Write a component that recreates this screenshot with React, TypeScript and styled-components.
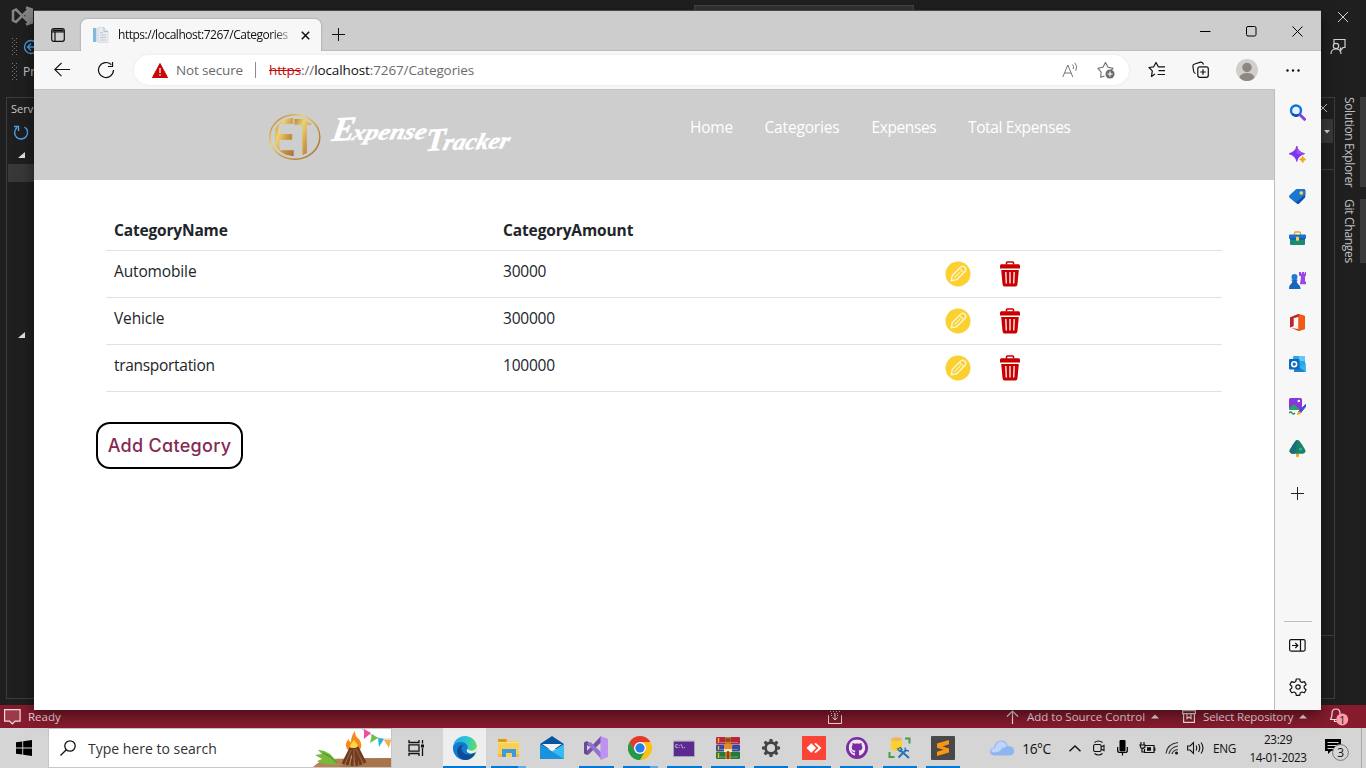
import React from "react";
import styled, { createGlobalStyle } from "styled-components";
import { FaGithub } from "react-icons/fa";

const GlobalStyle = createGlobalStyle`
  html, body { margin: 0; padding: 0; overflow: hidden; }
  * { box-sizing: border-box; }
  body { font-family: "Open Sans", "Noto Sans", sans-serif; font-size: 12px; }
  svg { display: block; flex: none; }
`;

const Desktop = styled.div`
  position: relative;
  display: flex;
  flex-direction: column;
  width: 1366px;
  height: 768px;
  overflow: hidden;
  background: #1f1f1f;
`;

/* ---------- IDE behind the browser ---------- */
const Ide = styled.div`
  display: flex;
  justify-content: space-between;
  height: 705px;
  background: #1f1f1f;
`;
const IdeLeft = styled.div`
  width: 40px;
  padding-top: 5px;
  color: #c8c8c8;
`;
const IdeLogo = styled.div`
  height: 29px;
  padding-left: 11px;
`;
const IdeToolRow = styled.div`
  display: flex;
  align-items: center;
  gap: 5px;
  height: 25px;
  padding-left: 11px;
  white-space: nowrap;
`;
const IdePanel = styled.div`
  margin: 13px 0 0 6px;
  height: 602px;
  border: 1px solid #3d3d3d;
  border-right: 0;
`;
const IdePanelTitle = styled.div`
  height: 24px;
  padding-left: 4px;
  line-height: 22px;
  font-size: 11px;
  white-space: nowrap;
`;
const IdeRefresh = styled.div`
  height: 24px;
  padding: 2px 0 0 6px;
`;
const IdeTreeMark = styled.div<{ $h: number }>`
  height: ${(p) => p.$h}px;
  padding: 6px 0 0 11px;
`;
const IdeSelected = styled.div`
  height: 18px;
  margin-left: 1px;
  margin-bottom: 144px;
  background: #383838;
`;
const IdeCommandBox = styled.div`
  width: 220px;
  height: 12px;
  margin: 5px 0 0 654px;
  padding: 3px 0 0 203px;
  border: 1px solid #444;
  background: #333;
`;
const IdeMiddle = styled.div`
  flex: 1;
`;
const IdeRight = styled.div`
  width: 52px;
`;
const IdeRightTop = styled.div`
  display: flex;
  flex-direction: column;
  gap: 15px;
  height: 97px;
  padding: 11px 0 0 15px;
`;
const IdeRightBody = styled.div`
  display: flex;
  justify-content: space-between;
`;
const IdeRightPanel = styled.div`
  width: 21px;
  height: 602px;
  border: 1px solid #3d3d3d;
  border-left: 0;
`;
const IdePanelClose = styled.div`
  height: 21px;
  padding: 6px 0 0 5px;
`;
const IdeDropdown = styled.div`
  display: flex;
  align-items: center;
  height: 24px;
  margin-right: 1px;
  padding-left: 9px;
  background: #383838;
`;
const IdeGap = styled.div<{ $h: number }>`
  height: ${(p) => p.$h}px;
  border-bottom: 1px solid #3d3d3d;
`;
const IdeTabs = styled.div`
  display: flex;
  flex-direction: column;
  gap: 12px;
`;
const IdeTab = styled.div<{ $h: number; $ls: number }>`
  display: flex;
  justify-content: flex-start;
  width: 24px;
  height: ${(p) => p.$h}px;
  border-right: 6px solid #3a3a3a;
  writing-mode: vertical-rl;
  line-height: 22px;
  font-size: 12px;
  letter-spacing: ${(p) => p.$ls}px;
  color: #c0c0c0;
  white-space: nowrap;
`;

const StatusBar = styled.div`
  display: flex;
  align-items: center;
  height: 23px;
  padding-left: 4px;
  background: #861b2d;
  color: #f4dde0;
  line-height: 23px;
`;
const StatusText = styled.span<{ $w: number; $ml: number; $ls?: number }>`
  width: ${(p) => p.$w}px;
  margin-left: ${(p) => p.$ml}px;
  letter-spacing: ${(p) => p.$ls ?? 0}px;
  font-size: 11.5px;
  white-space: nowrap;
`;
const StatusIcon = styled.span<{ $ml?: number }>`
  margin-left: ${(p) => p.$ml ?? 0}px;
`;

/* ---------- Browser ---------- */
const Browser = styled.div`
  position: absolute;
  left: 34px;
  top: 11px;
  display: flex;
  flex-direction: column;
  width: 1287px;
  height: 699px;
  background: #f7f7f7;
  box-shadow: 0 -1px 0 #4a4646, 0 5px 14px rgba(0, 0, 0, 0.5);
`;
const TitleBar = styled.div`
  display: flex;
  height: 40px;
  background: #cdcdcd;
  border-bottom: 1px solid #bdbdbd;
`;
const TabActions = styled.div`
  width: 47px;
  padding: 17px 0 0 17px;
`;
const Tab = styled.div`
  display: flex;
  align-items: center;
  width: 240px;
  height: 32px;
  margin-top: 8px;
  padding-left: 11px;
  border-radius: 6px 6px 0 0;
  background: #f7f7f7;
  box-shadow: 0 0 2px rgba(0, 0, 0, 0.35);
  clip-path: inset(-3px -3px 0 -3px);
`;
const TabTitle = styled.div`
  width: 174px;
  margin: 0 9px 2px 9px;
  white-space: nowrap;
  color: #111;
  font-size: 12px;
  letter-spacing: -0.48px;
  mask-image: linear-gradient(90deg, #000 155px, transparent 178px);
`;
const NewTab = styled.div`
  padding: 16px 0 0 10px;
`;
const WindowButtons = styled.div`
  display: flex;
  align-items: center;
  margin-left: auto;
  height: 40px;
`;
const WindowButton = styled.div`
  display: grid;
  place-items: center;
  width: 46px;
  padding-right: 1px;
`;
const Toolbar = styled.div`
  display: flex;
  align-items: center;
  height: 39px;
  padding-left: 20px;
  border-bottom: 1px solid #c2c2c2;
  margin-right: 46px;
`;
const ToolbarRow = styled.div`
  display: flex;
  align-items: center;
  flex: none;
  width: 1267px;
`;
const ToolSlot = styled.div<{ $w: number }>`
  display: flex;
  align-items: center;
  flex: none;
  width: ${(p) => p.$w}px;
`;
const AddressBar = styled.div`
  display: flex;
  align-items: center;
  width: 995px;
  height: 30px;
  margin-right: 19px;
  padding-left: 18px;
  border-radius: 15px;
  background: #fff;
  box-shadow: 0 0 3px rgba(0, 0, 0, 0.08);
  font-size: 13.5px;
`;
const NotSecure = styled.span`
  width: 79px;
  margin-left: 8px;
  color: #6b6b6b;
  letter-spacing: -0.15px;
  white-space: nowrap;
`;
const AddressDivider = styled.span`
  width: 1px;
  height: 16px;
  margin-right: 13px;
  background: #8a8a8a;
`;
const Url = styled.span`
  flex: 1;
  color: #6b6b6b;
  letter-spacing: -0.11px;
`;
const UrlScheme = styled.span`
  color: #c5080c;
  text-decoration: line-through;
`;
const UrlHost = styled.span`
  color: #111;
`;
const Content = styled.div`
  display: flex;
  flex: 1;
`;
const Page = styled.div`
  width: 1240px;
  background: #fff;
`;
const SiteHeader = styled.header`
  display: flex;
  height: 90px;
  padding-left: 234px;
  background: #cecece;
`;
const Brand = styled.div`
  width: 422px;
  padding-top: 19px;
`;
const SiteNav = styled.nav`
  display: flex;
  height: 24px;
  margin-top: 25px;
  color: #fff;
  font-size: 15.5px;
  line-height: 24px;
`;
const NavLink = styled.a<{ $w: number; $ls: number }>`
  width: ${(p) => p.$w}px;
  letter-spacing: ${(p) => p.$ls}px;
  white-space: nowrap;
`;
const CategoryTable = styled.div`
  width: 1116px;
  margin: 31px 0 0 72px;
  color: #212529;
  font-size: 15.5px;
`;
const TableRow = styled.div<{ $head?: boolean }>`
  display: grid;
  grid-template-columns: 389px 442px 1fr;
  height: ${(p) => (p.$head ? 40 : 47)}px;
  padding: ${(p) => (p.$head ? 7 : 8)}px 8px 0;
  border-bottom: 1px solid #dee2e6;
  font-weight: ${(p) => (p.$head ? 700 : 400)};
  line-height: 24px;
`;
const Cell = styled.span<{ $ls?: number }>`
  letter-spacing: ${(p) => p.$ls ?? 0}px;
`;
const Actions = styled.span`
  display: flex;
  gap: 28px;
  padding-top: 2px;
`;
const AddButton = styled.button`
  display: block;
  width: 147px;
  height: 47px;
  margin: 30px 0 0 62px;
  padding: 0;
  border: 2px solid #000;
  border-radius: 14px;
  background: #fff;
  color: #832a52;
  font-family: Inter, sans-serif;
  font-feature-settings: "cv11", "ss03";
  font-size: 18px;
  font-weight: 500;
  letter-spacing: 0.3px;
`;
const SideRail = styled.aside`
  display: flex;
  flex-direction: column;
  width: 47px;
  padding: 1px 1px 0 0;
  border-left: 1px solid #bdbdbd;
  background: #f7f7f7;
`;
const RailSlot = styled.div<{ $h?: number }>`
  display: grid;
  place-items: center;
  height: ${(p) => p.$h ?? 42}px;
`;
const RailFooter = styled.div`
  margin-top: auto;
  padding-bottom: 2px;
`;
const RailDivider = styled.div`
  width: 28px;
  height: 1px;
  margin: 0 0 2px 9px;
  background: #bfbfbf;
`;

/* ---------- Taskbar ---------- */
const Taskbar = styled.div`
  display: flex;
  height: 40px;
  background: #d5d5d5;
  color: #111;
`;
const StartButton = styled.div`
  display: grid;
  place-items: center;
  width: 48px;
`;
const SearchBox = styled.div`
  display: flex;
  align-items: center;
  width: 344px;
  height: 40px;
  padding-left: 11px;
  border: 1px solid #c6c6c6;
  background: #fff;
`;
const SearchText = styled.span`
  width: 227px;
  margin-left: 12px;
  color: #333;
  font-size: 14px;
  white-space: nowrap;
`;
const TaskSlot = styled.div<{ $w: number; $active?: boolean; $pr?: number }>`
  display: flex;
  flex-direction: column;
  align-items: center;
  justify-content: space-between;
  width: ${(p) => p.$w}px;
  padding-right: ${(p) => p.$pr ?? 0}px;
  background: ${(p) => (p.$active ? "#eeeeee" : "transparent")};
`;
const TaskGlyph = styled.div`
  display: grid;
  place-items: center;
  height: 38px;
  padding-top: 2px;
`;
const TaskLine = styled.div<{ $w: number; $split?: boolean }>`
  width: ${(p) => p.$w}px;
  height: 2px;
  background: ${(p) =>
    p.$w === 0 ? "none" : p.$split ? "linear-gradient(90deg, #0078d7 78%, #5fa9e6 78%)" : "#0078d7"};
`;
const Tray = styled.div`
  display: flex;
  align-items: center;
  margin-left: auto;
`;
const TraySlot = styled.div<{ $w: number; $fs?: number; $ls?: number; $pr?: number }>`
  display: flex;
  align-items: center;
  justify-content: center;
  width: ${(p) => p.$w}px;
  padding-right: ${(p) => p.$pr ?? 0}px;
  font-size: ${(p) => p.$fs ?? 12}px;
  letter-spacing: ${(p) => p.$ls ?? 0}px;
  white-space: nowrap;
`;
const Clock = styled.div`
  width: 70px;
  padding-bottom: 1px;
  text-align: center;
  font-size: 11.7px;
  line-height: 18px;
  letter-spacing: -0.38px;
`;
const ShowDesktop = styled.div`
  width: 5px;
  height: 40px;
  border-left: 1px solid #a8a8a8;
`;

/* ---------- Icons ---------- */
type GlyphProps = { w: number; h?: number; children: React.ReactNode; stroke?: string; sw?: number; fill?: string; box?: string };
const Glyph = ({ w, h = w, children, stroke = "none", sw = 1, fill = "none", box }: GlyphProps) => (
  <svg width={w} height={h} viewBox={box ?? `0 0 ${w} ${h}`} fill={fill} stroke={stroke} strokeWidth={sw}>
    {children}
  </svg>
);

const Grip = () => (
  <Glyph w={7} h={18} fill="#777">
    {[0, 4, 8, 12, 16].map((y) => (
      <g key={y}>
        <rect x="1" y={y} width="1" height="1" />
        <rect x="5" y={y} width="1" height="1" />
        <rect x="3" y={y + 2} width="1" height="1" />
      </g>
    ))}
  </Glyph>
);

const Caret = ({ down, color = "#f4dde0" }: { down?: boolean; color?: string }) => (
  <Glyph w={8} h={5} fill={color}>
    <path d={down ? "M1 1h6L4 4.500z" : "M0 4.500L4 .5l4 4z"} />
  </Glyph>
);

const BrandMark = () => (
  <svg width="250" height="56" viewBox="0 0 250 56">
    <defs>
      <linearGradient id="gold" x1="0" y1="0" x2="1" y2="1">
        <stop offset="0" stopColor="#a8702a" />
        <stop offset=".35" stopColor="#efd26a" />
        <stop offset=".6" stopColor="#c9953c" />
        <stop offset="1" stopColor="#9f6a2b" />
      </linearGradient>
      <clipPath id="disc">
        <ellipse cx="26.800" cy="28" rx="21.500" ry="19.300" />
      </clipPath>
    </defs>
    <ellipse cx="26.800" cy="28" rx="25" ry="22.300" fill="none" stroke="url(#gold)" strokeWidth="1.500" />
    <g clipPath="url(#disc)" fill="url(#gold)" stroke="url(#gold)" strokeWidth="1.800" fontFamily="Liberation Sans" fontSize="52">
      <text x="5.500" y="46" textLength="21" lengthAdjust="spacingAndGlyphs">E</text>
      <text x="26.500" y="46.500" textLength="20.500" lengthAdjust="spacingAndGlyphs">T</text>
    </g>
    <g fill="#fff" stroke="#fff" strokeWidth=".5" fontFamily="Liberation Serif" fontStyle="italic" fontWeight="700">
      <text transform="translate(63 32) rotate(-3) skewX(-12)" fontSize="34">E</text>
      <text transform="translate(83 31) rotate(-1) skewX(-16)" fontSize="22" textLength="74" lengthAdjust="spacingAndGlyphs">xpense</text>
      <text transform="translate(157 42) rotate(-3) skewX(-8)" fontSize="32">T</text>
      <text transform="translate(174 41) rotate(-1.500) skewX(-16)" fontSize="23" textLength="66" lengthAdjust="spacingAndGlyphs">racker</text>
    </g>
  </svg>
);

const EditIcon = () => (
  <Glyph w={26}>
    <circle cx="13" cy="13" r="12.500" fill="#fbd031" />
    <g transform="rotate(45 13 13)" stroke="#fff6d0" strokeLinejoin="round">
      <path d="M10 6q0-2.500 3-2.500t3 2.500V18L13 22.500 10 18z" strokeWidth="1.400" />
      <path d="M10.300 8h5.400M13 9.500v8.500" strokeWidth="1" />
    </g>
  </Glyph>
);

const TrashIcon = () => (
  <Glyph w={22} h={26}>
    <path d="M7.500 3.500V1.800q0-.8.8-.8h5.400q.8 0 .8.800v1.700" stroke="#c90000" strokeWidth="1.600" />
    <path d="M2.200 3.200h17.600q1.200 0 1.200 1.800V7.500H1V5q0-1.800 1.200-1.800zM2.200 9h17.600l-1.300 14q-.3 2.500-2 2.500h-11q-1.700 0-2-2.500z" fill="#c90000" />
    <path d="M6.800 11l.5 11.500M11 11v11.500M15.200 11l-.5 11.500" stroke="#fff" strokeWidth="1.300" />
  </Glyph>
);

const railIcons: React.ReactNode[] = [
  <>
    <circle cx="7" cy="6.500" r="5" stroke="#1473d6" strokeWidth="2.400" fill="#dff3ff" />
    <path d="M11.200 11l4.300 4.300" stroke="#8b3ce0" strokeWidth="3" strokeLinecap="round" />
    <path d="M3.500 10A5 5 0 0 0 9.500 11" stroke="#1746b8" strokeWidth="2.400" />
  </>,
  <>
    <path d="M7.800 0q1 6 7.800 7.700Q9 9.500 7.800 15.500 6.500 9.500 0 7.700 6.600 6 7.800 0z" fill="#7d35ee" stroke="#7d35ee" strokeWidth=".8" />
    <path d="M7.800 0q1 6 7.800 7.700H7.800z" fill="#a950f2" />
    <path d="M13.700 10q.5 2.800 3.300 3.500-2.800.7-3.300 3.500-.6-2.800-3.400-3.500 2.800-.7 3.400-3.500z" fill="#f0aa13" stroke="#f0aa13" strokeWidth=".5" />
  </>,
  <>
    <path d="M8.500 1h6q1.800 0 1.800 1.800v5.700q0 .8-.6 1.400l-5.500 5.600q-1.200 1-2.400 0L.8 9.700q-1-1.200 0-2.400L7 1.600q.7-.6 1.500-.6z" fill="#0f50a8" />
    <path d="M8.500 1h6q1.800 0 1.800 1.800v4L6.500 14.500.8 9.700q-1-1.200 0-2.400L7 1.600q.7-.6 1.500-.6z" fill="#1979d2" />
    <circle cx="12.300" cy="4.900" r="1.500" fill="#ffe08a" stroke="#edbb31" />
  </>,
  <>
    <path d="M5.500 5V3q0-1 1-1h4q1 0 1 1v2" stroke="#e6a719" strokeWidth="1.300" />
    <rect x="1" y="7" width="15" height="8" rx="1" fill="#198a78" />
    <rect y="4.500" width="17" height="4.500" rx="1" fill="#1773cf" />
    <path d="M1 9h15" stroke="#0e4d92" />
    <rect x="7" y="6.800" width="3" height="4" rx=".8" fill="#ffd13b" />
  </>,
  <>
    <path d="M10 0h2v1.500h1V0h2v1.500h.8V0H17v3.500l-1 1V9l1 1.200v2h-6L12 4.500l-2-1z" fill="#9d45e5" />
    <circle cx="5.500" cy="5" r="3" fill="#1c7cd5" />
    <path d="M2.500 7.500h6v1.300H7.600q.2 3 2.400 4.200 1.500.7 1.500 4H0q0-3.300 1-4 2.300-1.200 2.500-4.200h-1z" fill="#1766be" />
  </>,
  <>
    <path d="M9.500 0l6.500 2v13l-6.500 2-7-3 7 .9V2.800L4.500 4v8L1 13.400V3.600z" fill="#e24a12" />
    <path d="M9.500 0l6.500 2v13l-6.500 2V0z" fill="#f05a14" />
    <path d="M9.500 0v2.800L4.500 4v8L1 13.400V3.600z" fill="#be2430" />
  </>,
  <>
    <rect x="4" width="12" height="11" rx="1" fill="#29a7ea" />
    <path d="M10 0h6v5h-6z" fill="#63c8f5" />
    <path d="M5 8l5 3 6.500-4v9H5z" fill="#1683d2" />
    <path d="M10 11l6.500 5V7z" fill="#35b1ef" />
    <rect y="3" width="10.500" height="10.500" rx="1" fill="#0f68bd" />
    <circle cx="5.200" cy="8.200" r="2.400" stroke="#fff" strokeWidth="1.600" />
  </>,
  <>
    <rect y="0" width="13" height="12" rx="1.500" fill="#8a35dd" />
    <circle cx="9.800" cy="3" r="1.300" fill="#fff" />
    <path d="M0 10.500l5-4.500 6 6H1.500Q0 12 0 10.500z" fill="#28a463" />
    <path d="M9.500 13.500L16.500 6.500l1 1-6 7.500z" fill="#5546dd" stroke="#4054d2" />
    <path d="M8 17q.3-4 2.500-3.500 2 .8.500 2.500-1 1-3 1z" fill="#f2b11d" />
    <path d="M0 15q2-2 3 0t3 0" stroke="#208f52" strokeWidth="1.300" />
  </>,
  <>
    <rect x="7" y="12" width="3" height="5" rx="1" fill="#f1a61c" />
    <path d="M8.500 0q1 0 2 1l2.500 3.500 3 5q1.500 3.500-2 4.200H3q-3.500-.7-2-4.200l3-5L6.500 1q1-1 2-1z" fill="#18836b" />
    <path d="M8.500 0q-1 0-2 1L4 4.500l-3 5q-1.500 3.500 2 4.200h3z" fill="#1a6f78" />
    <circle cx="11.500" cy="9" r="1.600" fill="#48a98a" />
  </>,
];

const gearTeeth = [0, 45, 90, 135, 180, 225, 270, 315];

const EdgeLogo = () => (
  <svg width="24" height="24" viewBox="0 0 24 24">
    <defs>
      <linearGradient id="edgeTop" x1="0" x2="1" y1=".3" y2=".5">
        <stop offset="0" stopColor="#23a8ee" />
        <stop offset=".55" stopColor="#2bc8d1" />
        <stop offset="1" stopColor="#68df52" />
      </linearGradient>
    </defs>
    <circle cx="12" cy="12" r="12" fill="url(#edgeTop)" />
    <path d="M0 11.500C1 7 5 5.800 8.500 6c4 .2 6.500 3 6.300 6 0 1.500-1.200 2-1 3.200.4 2 5 3.300 8.800.9C20.500 21 16.500 24 12 24 5.400 24 0 18.600 0 11.500z" fill="#137bcf" />
    <path d="M8.500 12.500q0-3 3-3.700c-4.500-.6-7.500 3-7.300 6.700.2 4.500 3.800 8.500 8.800 8.500 4-.2 7.500-2.900 9.500-7-3 2-13.500 3.500-14-4.500z" fill="#114a98" />
    <path d="M14.700 12.700c-.6 1-1 1.300-.9 2.500.4 2 5 3.300 8.800.9 1.500-1.600 1.600-3.600 1.200-5.600q-1 3.800-5 4.200c-2 .2-3.600-.8-4.100-2z" fill="#eee" />
  </svg>
);

const taskIcons: { w: number; line: number; split?: boolean; active?: boolean; icon: React.ReactNode }[] = [
  { w: 43, line: 43, active: true, icon: <EdgeLogo /> },
  {
    w: 44, line: 35, split: true,
    icon: (
      <Glyph w={24}>
        <path d="M2 3h9l1.500 2H23v16H2z" fill="#fbce55" />
        <path d="M2 3h8.500v3H2z" fill="#dc9a0c" />
        <path d="M2 6h21v1H2z" fill="#fde08c" />
        <path d="M6 21v-8h14v8h-4v-4h-6v4z" fill="#3d9bdb" />
        <path d="M2 18h4v3H2zM20 18h3v3h-3z" fill="#f5bd3d" />
      </Glyph>
    ),
  },
  {
    w: 44, line: 0,
    icon: (
      <Glyph w={24}>
        <path d="M0 8L12 0l12 8v5H0z" fill="#0a559f" />
        <path d="M0 8l12 7.500L24 8v15H0z" fill="#35bdf1" />
        <path d="M2.500 8h19L12 15z" fill="#f4f4f4" />
        <path d="M0 8l24 15H0z" fill="#1c91dc" />
        <path d="M2.500 8h19L12 14.500z" fill="#f4f4f4" />
      </Glyph>
    ),
  },
  {
    w: 44, line: 35,
    icon: (
      <Glyph w={24}>
        <path d="M0 6.500L3 5l4 3.500L3 12l4 3.500L3 19l-3-1.500z" fill="#6c4799" />
        <path d="M3 9v6l3.500-3z" fill="#d5d5d5" />
        <path d="M17 0v6.500L4 19l-1.500-3.500z" fill="#7452a4" />
        <path d="M3 7.500L6.500 6 18 17v7z" fill="#9571cf" />
        <path d="M16.500 0L24 3v18l-7.500 3z" fill="#bd92f0" />
      </Glyph>
    ),
  },
  {
    w: 44, line: 35, split: true,
    icon: (
      <Glyph w={24}>
        <circle cx="12" cy="12" r="12" fill="#fbc116" />
        <path d="M1.600 6A12 12 0 0 1 22.400 6H12L6.800 15z" fill="#e23b2e" />
        <path d="M1.600 6A12 12 0 0 0 12 24l5.200-9H6.800z" fill="#229a4b" />
        <circle cx="12" cy="12" r="6" fill="#fff" />
        <circle cx="12" cy="12" r="4.700" fill="#2a7bea" />
      </Glyph>
    ),
  },
  {
    w: 44, line: 35,
    icon: (
      <Glyph w={22} h={17}>
        <rect x=".5" y=".5" width="21" height="16" fill="#5b2a91" stroke="#a9a2b0" />
        <path d="M0 .8h22" stroke="#c8c8c8" strokeWidth="1.500" />
        <text x="2" y="8" fontFamily="DejaVu Sans Mono" fontSize="5.500" fill="#fff" textLength="11">C:\.</text>
      </Glyph>
    ),
  },
  {
    w: 43, line: 34,
    icon: (
      <Glyph w={24} h={22}>
        <rect y="0" width="24" height="7" rx="1" fill="#b7263d" />
        <rect y="7.500" width="24" height="6.500" rx="1" fill="#3a46a5" />
        <rect y="14.500" width="24" height="7.500" rx="1" fill="#257a3b" />
        <path d="M2.500 1v5M2.500 9v4M2.500 16v5" stroke="#efb62d" strokeWidth="1.500" />
        <path d="M4 5.500h18M4 12.500h18M4 20h18" stroke="#ffffff55" />
        <path d="M9 0h6v22H9z" fill="#c5792c" />
        <path d="M9.500 1.500h5v3h-5z" fill="#7b451a" />
        <path d="M8 7h8.500l-.5 6H8z" fill="#e48b2b" />
        <path d="M8 12h8v3H8z" fill="#f6e4c0" />
        <path d="M12 14v8" stroke="#6e3e14" strokeWidth="1.600" />
      </Glyph>
    ),
  },
  {
    w: 43, line: 34,
    icon: (
      <Glyph w={18} box="-9 -9 18 18">
        <circle r="5.400" stroke="#424242" strokeWidth="2.600" />
        {gearTeeth.map((a) => (
          <path key={a} d="M-2 -6.300L-1.300 -9h2.600L2 -6.300z" fill="#424242" transform={`rotate(${a})`} />
        ))}
      </Glyph>
    ),
  },
  {
    w: 43, line: 34,
    icon: (
      <Glyph w={24}>
        <path d="M0 0h24v24H0z" fill="#fb4336" />
        <path d="M4.500 12L9.300 7.200l4.800 4.800-4.800 4.800z" fill="#fff" />
        <path d="M12.200 7.700l1.700-.7 5.600 5-5.600 5-1.700-.7 4.300-4.300z" fill="#fff" />
      </Glyph>
    ),
  },
  {
    w: 43, line: 33,
    icon: (
      <Glyph w={22}>
        <circle cx="11" cy="11" r="11" fill="#7a2ca0" />
        <g transform="translate(2.500 2.200)">
          <FaGithub size={17} color="#eee6f3" />
        </g>
      </Glyph>
    ),
  },
  {
    w: 43, line: 34,
    icon: (
      <Glyph w={24}>
        <path d="M3 3q5.500-4 11 0v10q-5.500 4-11 0z" fill="#fbd12c" />
        <ellipse cx="8.500" cy="3.200" rx="5.500" ry="2" fill="#eeb36d" />
        <path d="M17 2.500h4.500v5M1.500 16v5H6.500" stroke="#4c9c46" strokeWidth="2" />
        <path d="M10.500 21.500l8-8M12 14l9 8" stroke="#2474b8" strokeWidth="2" />
        <path d="M9.500 13l3-1.500 1.500 2-2 2zM17 11.500l.5 3 3.500.5" stroke="#2474b8" strokeWidth="1.300" />
      </Glyph>
    ),
  },
  {
    w: 43, line: 34,
    icon: (
      <Glyph w={24}>
        <rect width="24" height="24" rx="1" fill="#494949" />
        <path d="M6 7.500L18 4v4.300l-6.500 2.200L18 12.500v4L6 20v-4.200l6.500-2.100L6 11.800z" fill="#fb9512" />
      </Glyph>
    ),
  },
];

const SearchArt = () => (
  <Glyph w={78} h={38}>
    <path d="M0 38q8-8 18-8 20-1 60-1v9z" fill="#b58355" />
    <path d="M46 29h32v9H26z" fill="#a06d45" opacity=".6" />
    <path d="M25 35Q16 20 5 21l4 4-7 1 7 4-5 2q8 5 21 3z" fill="#78b83d" />
    <path d="M10 24q8 3 14 10" stroke="#4a8a24" />
    <path d="M34 20q-3-6 2-10 0 3 2 3 0-6 4-11 0 6 4 8 4 6 1 11-6 5-13-1z" fill="#f58b1a" />
    <path d="M37 21q-1-5 4-10 4 4 5 9-4 5-9 1z" fill="#fdd548" />
    <path d="M30 35l8-16M34 36l5-17M39 37l2-18M44 37l-2-18M48 36l-5-17M52 34l-8-16" stroke="#6d3b22" strokeWidth="3" />
    <path d="M32 35l6-14M41 36V20M50 34l-7-14" stroke="#a4643b" />
    <path d="M49 0q14 12 29 10" stroke="#999" strokeWidth=".6" />
    <path d="M51 0l7 4-7 6z" fill="#f04fa5" />
    <path d="M59 5l6 4-8 5z" fill="#6dc04a" />
    <path d="M65 9l6 1-5 8z" fill="#27b2df" />
    <path d="M71 11h7l-2 8z" fill="#f6ad48" />
  </Glyph>
);

/* ---------- Screen ---------- */
const categories = [
  { name: "Automobile", amount: "30000" },
  { name: "Vehicle", amount: "300000" },
  { name: "transportation", amount: "100000" },
];

const IdeWindow = () => (
  <Ide>
    <IdeLeft>
      <IdeLogo>
        <Glyph w={22}>
          <path d="M2 6l3-1.500L15.500 15V6.500L5 17l-3-1.500zM15 2.500l6 2v13l-6 2" stroke="#858585" strokeWidth="2.500" />
          <path d="M16 3l4 2v12l-4 2z" fill="#858585" />
        </Glyph>
      </IdeLogo>
      <IdeToolRow>
        <Grip />
        <Glyph w={16} stroke="#4f9fe8" sw={1.300}>
          <circle cx="8" cy="8" r="6.500" />
          <path d="M12 8H4.500M8 4.500L4.500 8 8 11.500" />
        </Glyph>
      </IdeToolRow>
      <IdeToolRow>
        <Grip />
        Pr
      </IdeToolRow>
      <IdePanel>
        <IdePanelTitle>Serv</IdePanelTitle>
        <IdeRefresh>
          <Glyph w={17} stroke="#4da2ee" sw={1.400}>
            <path d="M11.500 3A6.500 6.500 0 1 1 4 3.500M1 2.500h4.500V7" />
          </Glyph>
        </IdeRefresh>
        <IdeTreeMark $h={18}>
          <Glyph w={7} fill="#e0e0e0"><path d="M7 0v6H0z" /></Glyph>
        </IdeTreeMark>
        <IdeSelected />
        <IdeTreeMark $h={20}>
          <Glyph w={7} fill="#e0e0e0"><path d="M7 0v6H0z" /></Glyph>
        </IdeTreeMark>
      </IdePanel>
    </IdeLeft>
    <IdeMiddle>
      <IdeCommandBox>
        <Glyph w={6} h={3} stroke="#aaa"><path d="M1 2.500q2-2.500 4 0" /></Glyph>
      </IdeCommandBox>
    </IdeMiddle>
    <IdeRight>
      <IdeRightTop>
        <Glyph w={22} h={12} stroke="#d0d0d0"><path d="M9 1l10 10M19 1L9 11" /></Glyph>
        <Glyph w={18} h={17} stroke="#d0d0d0" sw={1.200}>
          <path d="M5 6V1.500h11v8h-2l-2.500 3V9.500" />
          <circle cx="7" cy="8" r="2.700" />
          <path d="M2 16q0-5 5-5t5 5" />
        </Glyph>
      </IdeRightTop>
      <IdeRightBody>
        <IdeRightPanel>
          <IdePanelClose>
            <Glyph w={9} stroke="#d0d0d0"><path d="M0 0l8 8M8 0L0 8" /></Glyph>
          </IdePanelClose>
          <IdeDropdown><Caret down color="#d0d0d0" /></IdeDropdown>
          <IdeGap $h={27} />
          <IdeGap $h={466} />
        </IdeRightPanel>
        <IdeTabs>
          <IdeTab $h={90} $ls={-0.35}>Solution Explorer</IdeTab>
          <IdeTab $h={64} $ls={-0.28}>Git Changes</IdeTab>
        </IdeTabs>
      </IdeRightBody>
    </IdeRight>
  </Ide>
);

const BrowserWindow = () => (
  <Browser>
    <TitleBar>
      <TabActions>
        <Glyph w={14} stroke="#111" sw={1.200}>
          <rect x=".7" y=".7" width="12.600" height="12.600" rx="2" />
          <path d="M1 4h12M4 4v9" />
          <path d="M1.500 2.500h11" strokeWidth="2" />
        </Glyph>
      </TabActions>
      <Tab>
        <Glyph w={17}>
          <path d="M1 1h3.500v14H1z" fill="#82b7de" />
          <path d="M4.500 1h1.500v14H4.500z" fill="#dfeaf3" />
          <path d="M6 .5h6l4 4v11H6z" fill="#e9ecef" stroke="#cdd3da" strokeWidth=".6" />
          <path d="M12 .5v4h4" stroke="#b7bfc9" />
          <path d="M8 5.500h3M8 8h6M8 10.500h6M8 13h6" stroke="#c3cad2" />
        </Glyph>
        <TabTitle>https://localhost:7267/Categories</TabTitle>
        <Glyph w={9} stroke="#111" sw={1.500}><path d="M.8 .8l7.400 7.400M8.200 .8L.8 8.200" /></Glyph>
      </Tab>
      <NewTab>
        <Glyph w={15} stroke="#111" sw={1}><path d="M7.500 1v13M1 7.500h13" /></Glyph>
      </NewTab>
      <WindowButtons>
        <WindowButton><Glyph w={11} stroke="#000"><path d="M0 5.500h10.500" /></Glyph></WindowButton>
        <WindowButton><Glyph w={11} stroke="#000"><rect x=".5" y=".5" width="9.500" height="9.500" rx="1.500" /></Glyph></WindowButton>
        <WindowButton><Glyph w={11} stroke="#000"><path d="M.5 .5l10 10M10.500 .5l-10 10" /></Glyph></WindowButton>
      </WindowButtons>
    </TitleBar>
    <Toolbar>
      <ToolbarRow>
        <ToolSlot $w={43}>
          <Glyph w={17} stroke="#111" sw={1.100}><path d="M7.500 1L.8 7.500l6.700 6.700M1 7.500h15" /></Glyph>
        </ToolSlot>
        <ToolSlot $w={37}>
          <Glyph w={18} stroke="#111" sw={1.200}><path d="M16.500 9a7.500 7.500 0 1 1-2.200-5.300M15.500 1v4.500H11" /></Glyph>
        </ToolSlot>
        <AddressBar>
          <Glyph w={16} h={15}>
            <path d="M8 .5L15.500 14.500H.5z" fill="#cb0606" stroke="#cb0606" strokeLinejoin="round" />
            <path d="M8 5v5M8 11.200v1.500" stroke="#fff" strokeWidth="1.300" />
          </Glyph>
          <NotSecure>Not secure</NotSecure>
          <AddressDivider />
          <Url>
            <UrlScheme>https</UrlScheme>://<UrlHost>localhost</UrlHost>:7267/Categories
          </Url>
          <ToolSlot $w={35}>
            <Glyph w={17} stroke="#747474" sw={1}>
              <path d="M.8 15L5.800 3l5 12M2.600 11H9M10.500 2.500q2 2 .6 4.500M12.800 .8q3.400 3.500 1 8" />
            </Glyph>
          </ToolSlot>
          <ToolSlot $w={32}>
            <Glyph w={18} stroke="#6b6b6b" sw={1.100}>
              <path d="M7.500 15l-3.800 1.300.4-5.300-3.200-3.700 5-1L8.500 1.500 11 6.300l5 1-2 2" strokeLinejoin="round" />
              <circle cx="13" cy="13" r="4.500" fill="#6b6b6b" stroke="none" />
              <path d="M13 10.500v5M10.500 13h5" stroke="#fff" />
            </Glyph>
          </ToolSlot>
        </AddressBar>
        <ToolSlot $w={44}>
          <Glyph w={18} stroke="#111" sw={1.200}>
            <path d="M7 13l-3.500 2.500.8-5.700L1 6.500l4.700-.7L8 1.500l2.300 4.300h6.700M10.500 9.700h6.500M9.500 13.500h7.500" strokeLinejoin="round" />
          </Glyph>
        </ToolSlot>
        <ToolSlot $w={44}>
          <Glyph w={18} stroke="#111" sw={1.200}>
            <rect x="5.800" y="5.800" width="10.500" height="10.500" rx="2" />
            <path d="M11 8.300v5.500M8.300 11h5.500M3.500 12.500Q2 12 1.700 10.500L.9 5.500Q.7 3.500 2.600 3l6-1.800Q10.600 .8 11.500 3.500" />
          </Glyph>
        </ToolSlot>
        <ToolSlot $w={50}>
          <Glyph w={22}>
            <circle cx="11" cy="11" r="11" fill="#d1cfca" />
            <circle cx="11" cy="8.500" r="4.700" fill="#8d8682" />
            <path d="M3.500 18.500q1-4.500 7.500-4.500t7.500 4.500q-3 3.500-7.500 3.500t-7.500-3.500z" fill="#8d8682" />
          </Glyph>
        </ToolSlot>
        <Glyph w={14} h={3} fill="#111">
          <circle cx="1.500" cy="1.500" r="1.200" /><circle cx="7" cy="1.500" r="1.200" /><circle cx="12.500" cy="1.500" r="1.200" />
        </Glyph>
      </ToolbarRow>
    </Toolbar>
    <Content>
      <Page>
        <SiteHeader>
          <Brand><BrandMark /></Brand>
          <SiteNav>
            <NavLink $w={74.500} $ls={-0.2}>Home</NavLink>
            <NavLink $w={107} $ls={-0.17}>Categories</NavLink>
            <NavLink $w={96.500} $ls={-0.4}>Expenses</NavLink>
            <NavLink $w={110} $ls={-0.38}>Total Expenses</NavLink>
          </SiteNav>
        </SiteHeader>
        <CategoryTable>
          <TableRow $head>
            <Cell $ls={-0.17}>CategoryName</Cell>
            <Cell $ls={-0.12}>CategoryAmount</Cell>
          </TableRow>
          {categories.map((c) => (
            <TableRow key={c.name}>
              <Cell $ls={c.name === "transportation" ? -0.3 : -0.14}>{c.name}</Cell>
              <Cell $ls={-0.22}>{c.amount}</Cell>
              <Actions><EditIcon /><TrashIcon /></Actions>
            </TableRow>
          ))}
        </CategoryTable>
        <AddButton>Add Category</AddButton>
      </Page>
      <SideRail>
        {railIcons.map((icon, i) => (
          <RailSlot key={i}><Glyph w={17}>{icon}</Glyph></RailSlot>
        ))}
        <RailSlot $h={49}><Glyph w={13} stroke="#222"><path d="M6.500 0v13M0 6.500h13" /></Glyph></RailSlot>
        <RailFooter>
          <RailDivider />
          <RailSlot>
            <Glyph w={17} h={13} stroke="#111" sw={1.200}>
              <rect x=".6" y=".6" width="15.500" height="11.500" rx="1.500" />
              <path d="M11.500 1v11M3 6.500h5.500M6.300 4l2.500 2.500L6.300 9" />
            </Glyph>
          </RailSlot>
          <RailSlot>
            <Glyph w={18} stroke="#111" sw={1.200}>
              <circle cx="9" cy="9" r="2.200" />
              <path d="M7.300 1h3.400l.6 2.500 1.600.9 2.500-.8 1.700 3-1.900 1.700v1.800l1.900 1.700-1.700 3-2.500-.8-1.600.9-.6 2.500H7.300l-.6-2.500-1.600-.9-2.500.8-1.700-3 1.900-1.700V8.300L.9 6.600l1.700-3 2.500.8 1.600-.9z" strokeLinejoin="round" />
            </Glyph>
          </RailSlot>
        </RailFooter>
      </SideRail>
    </Content>
  </Browser>
);

const App = () => (
  <Desktop>
    <GlobalStyle />
    <IdeWindow />
    <StatusBar>
      <Glyph w={17} h={17} stroke="#f4dde0" sw={1.200}><path d="M.6 1.600h15.500v11.500h-5L8.300 16l-2.800-2.900H.6z" fill="#9c3a4a" /></Glyph>
      <StatusText $w={40} $ml={7}>Ready</StatusText>
      <StatusIcon $ml={760}>
        <Glyph w={14} stroke="#f4dde0"><path d="M.5 5v8.500h13V5M7 3v7M4.500 7.500L7 10l2.500-2.500" /><path d="M3 3.500h9M2 1.500h10M3 5.500h9" strokeDasharray="1 2" /></Glyph>
      </StatusIcon>
      <StatusIcon $ml={164}>
        <Glyph w={13} h={14} stroke="#f4dde0" sw={1.200}><path d="M6.500 14V1M1 6.500L6.500 1 12 6.500" /></Glyph>
      </StatusIcon>
      <StatusText $w={124} $ml={8} $ls={0}>Add to Source Control</StatusText>
      <Caret />
      <StatusIcon $ml={23}>
        <Glyph w={14} h={13} stroke="#f4dde0" sw={1.200}><path d="M.6 .6h12.800v3H.6zM1.600 3.600v8.800h10.800V3.600M5 3.600v5l2-1.500 2 1.500v-5" /></Glyph>
      </StatusIcon>
      <StatusText $w={96} $ml={7} $ls={-0.1}>Select Repository</StatusText>
      <Caret />
      <StatusIcon $ml={22}>
        <Glyph w={22} h={19}>
          <path d="M1 12.500q2-1.500 2-6Q3 2 7 2t4 4.500V9M1 12.500h7M5.500 13v1.500H8" stroke="#f4dde0" strokeWidth="1.200" />
          <circle cx="13.200" cy="12.500" r="6" fill="#ff9ba8" />
          <text x="10" y="16.700" fontSize="11.500" fill="#222">1</text>
        </Glyph>
      </StatusIcon>
    </StatusBar>
    <Taskbar>
      <StartButton>
        <Glyph w={16} fill="#000"><path d="M0 2.300L6.300 1.400V7.500H0zM7.200 1.300L16 0v7.500H7.200zM0 8.400h6.300v6.200L0 13.700zM7.200 8.400H16V16l-8.800-1.300z" /></Glyph>
      </StartButton>
      <SearchBox>
        <Glyph w={16} stroke="#111" sw={1.300}><circle cx="10" cy="6" r="5.200" /><path d="M6.300 9.700L.5 15.500" /></Glyph>
        <SearchText>Type here to search</SearchText>
        <SearchArt />
      </SearchBox>
      <TaskSlot $w={51} $pr={2}>
        <TaskGlyph>
          <Glyph w={17} h={16} stroke="#111" sw={1.300}>
            <path d="M1 0v2.500h10V0M1 16v-2.500h10V16M1 4.800h10v6.400H1zM14.500 0v3.500M14.500 8v8" />
            <path d="M13 4.500h3v3h-3z" fill="#111" stroke="none" />
          </Glyph>
        </TaskGlyph>
      </TaskSlot>
      {taskIcons.map((t, i) => (
        <TaskSlot key={i} $w={t.w} $active={t.active}>
          <TaskGlyph>{t.icon}</TaskGlyph>
          <TaskLine $w={t.line} $split={t.split} />
        </TaskSlot>
      ))}
      <Tray>
        <TraySlot $w={32}>
          <Glyph w={24} h={16}>
            <path d="M5 15.500Q0 15.500 0 11.500 0 8 4 7.500 5 1 11 .5q5.500 0 6.500 5.500 6.500 0 6.500 5 0 4.500-5 4.500z" fill="#8fb5f0" />
            <path d="M5 12.500Q1 12 1 10q1-2 4-2Q6 2 11 1.500q5 0 5.500 5.500Q12 7 10 11z" fill="#bfd6fa" />
          </Glyph>
        </TraySlot>
        <TraySlot $w={45} $pr={8} $fs={13.700} $ls={-0.4}>16°C</TraySlot>
        <TraySlot $w={24}><Glyph w={12} h={7} stroke="#111" sw={1.400}><path d="M.5 6.300L6 1l5.500 5.300" /></Glyph></TraySlot>
        <TraySlot $w={24}>
          <Glyph w={12} h={16} stroke="#111" sw={1.100}><rect x=".6" y="4.500" width="7.500" height="7" rx="1.500" /><path d="M8 7l3-1.500v5L8 9M1.500 2.500Q5.500-.5 9.500 2.500M1.500 13.500q4 3 8 0" /></Glyph>
        </TraySlot>
        <TraySlot $w={23}>
          <Glyph w={11} h={16} stroke="#000" sw={1.200}><rect x="2.500" width="6" height="11.500" rx="1" fill="#000" stroke="none" /><path d="M.7 7v3.500q0 2 2 2h5.600q2 0 2-2V7M5.500 12.500v3" /></Glyph>
        </TraySlot>
        <TraySlot $w={26}>
          <Glyph w={17} h={13} stroke="#111" sw={1.200}><path d="M5.500 3.500h9.500v7H5.500V7M15.800 5.500v3.500M2 0v3M5 0v3M1 3h5v2q-2 2-4 1zM3 6v4h3" /><path d="M8 5.200h4v3.600H8z" fill="#111" stroke="none" /></Glyph>
        </TraySlot>
        <TraySlot $w={24}>
          <Glyph w={14} h={14} stroke="#333" sw={1.100}><path d="M1 12.500Q2 3 13 1.500M4 13Q5 6.500 13 5M7 13q1-4 6-4.500" /><circle cx="11.500" cy="12" r="1.500" fill="#111" stroke="none" /></Glyph>
        </TraySlot>
        <TraySlot $w={22}>
          <Glyph w={17} h={14} stroke="#111" sw={1.100}><path d="M.6 5h2.500L6.500 1.500v11L3.100 9H.6zM9 4.500q1.500 2.500 0 5M11.500 3q2.500 4 0 8M14 1.500q4 5.500 0 11" /></Glyph>
        </TraySlot>
        <TraySlot $w={37} $fs={11.800} $ls={-0.35}>ENG</TraySlot>
        <Clock>23:29<br />14-01-2023</Clock>
        <TraySlot $w={48} $pr={1}>
          <Glyph w={25} h={26}>
            <path d="M1 4h16v12H7l-3 3v-3H1z" fill="#000" />
            <path d="M3.500 7.500h11M3.500 10.500h11M3.500 13.500h8" stroke="#d5d5d5" />
            <circle cx="16.500" cy="17.500" r="7.900" fill="#d5d5d5" stroke="#777" />
            <text x="13.200" y="22" fontSize="12" fill="#111">3</text>
          </Glyph>
        </TraySlot>
        <ShowDesktop />
      </Tray>
    </Taskbar>
    <BrowserWindow />
  </Desktop>
);

export default App;
